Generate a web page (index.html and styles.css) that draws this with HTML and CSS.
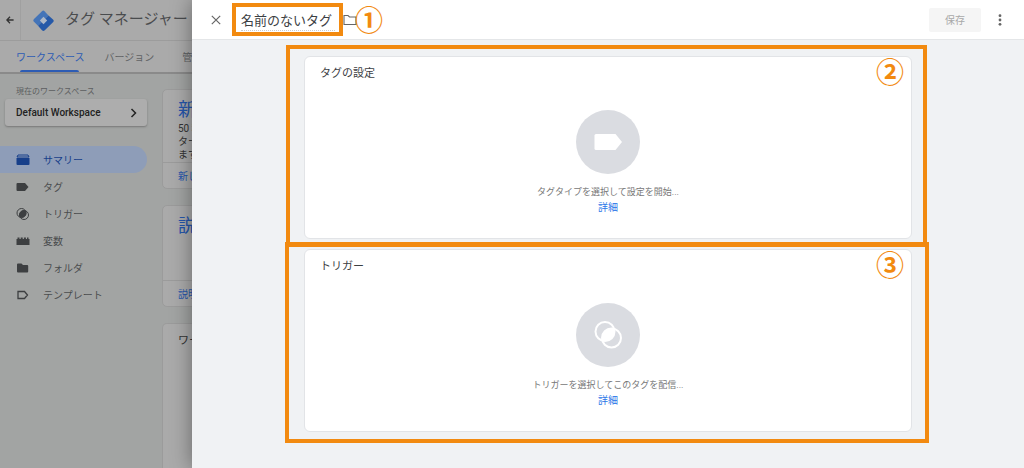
FILE: index.html
```html
<!DOCTYPE html>
<html lang="ja">
<head>
<meta charset="utf-8">
<title>タグ マネージャー</title>
<meta name="viewport" content="width=device-width, initial-scale=1">
<link rel="stylesheet" href="styles.css">
</head>
<body>
<div class="app">
  <header class="topbar">
    <button class="back" aria-label="戻る"><svg width="8" height="8" viewBox="0 0 8 8"><path d="M7.6 4H1M4 .8L.9 4 4 7.2" fill="none" stroke="#333" stroke-width="1.3"/></svg></button>
    <svg class="logo" width="21" height="21" viewBox="0 0 21 21"><path d="M9 1.2L1 9a2 2 0 0 0 0 2.800L5 15.800 15.500 5.500 11.500 1.200a1.800 1.800 0 0 0-2.500 0z" fill="#4474b8"/><path d="M15.500 5.500l4.500 4a1.800 1.800 0 0 1 0 2.700l-8.200 8a2 2 0 0 1-2.800 0L5 15.800z" fill="#2659a8"/><path d="M10.500 6.800l3.700 3.700-3.700 3.700-3.700-3.700z" fill="#aeb8c8"/></svg>
    <span class="product">タグ マネージャー</span>
  </header>
  <nav class="tabs">
    <a class="tab tab-active" href="#">ワークスペース</a>
    <a class="tab" href="#">バージョン</a>
    <a class="tab tab-last" href="#">管理</a>
  </nav>
  <div class="columns">
    <aside class="sidebar">
      <div class="ws-label">現在のワークスペース</div>
      <button class="ws-button">Default Workspace<svg width="7" height="10" viewBox="0 0 7 10"><path d="M1.500 1l4 4-4 4" fill="none" stroke="#222" stroke-width="1.500"/></svg></button>
      <nav class="menu">
        <a class="item item-active" href="#"><svg width="14" height="12" viewBox="0 0 14 12"><path d="M2 1h10l1 2H1z" fill="none" stroke="#173f8a"/><path d="M.5 4h13v6a1 1 0 0 1-1 1h-11a1 1 0 0 1-1-1z" fill="#173f8a"/></svg>サマリー</a>
        <a class="item" href="#"><svg width="14" height="12" viewBox="0 0 14 12"><path d="M1.500 2H9l3.500 4L9 10H1.500a1 1 0 0 1-1-1V3a1 1 0 0 1 1-1z" fill="#3d3f41"/></svg>タグ</a>
        <a class="item" href="#"><svg width="14" height="12" viewBox="0 0 14 12"><g fill="none" stroke="#3d3f41"><circle cx="5.500" cy="5" r="4.500"/><circle cx="8" cy="7" r="4.500"/></g><path d="M9.800 3A4.500 4.500 0 0 0 3.700 9.100 4.500 4.500 0 0 0 9.800 3z" fill="#3d3f41"/></svg>トリガー</a>
        <a class="item" href="#"><svg width="14" height="12" viewBox="0 0 14 12"><path d="M.5 10V4h1V2.500h2V4h1.200V2.500h2V4h1.200V2.500h2V4h1.100V2.500h1.500V4h1v6z" fill="#3d3f41"/></svg>変数</a>
        <a class="item" href="#"><svg width="14" height="12" viewBox="0 0 14 12"><path d="M2 1.500h3.500L7 3h4.200a1 1 0 0 1 1 1v5.500a1 1 0 0 1-1 1H2a1 1 0 0 1-1-1v-7a1 1 0 0 1 1-1z" fill="#3d3f41"/></svg>フォルダ</a>
        <a class="item" href="#"><svg width="14" height="12" viewBox="0 0 14 12"><path d="M2 2.500h6.500L11.500 6l-3 3.500H2z" fill="none" stroke="#3d3f41" stroke-width="1.300"/></svg>テンプレート</a>
      </nav>
    </aside>
    <main class="cards">
      <section class="tile">
        <div class="tile-body"><h2 class="tile-title">新しいタグ</h2><p class="tile-text">50 種類以上の<br>ターゲットを選び<br>ます。</p></div>
        <a class="tile-link" href="#">新しいタグを追加</a>
      </section>
      <section class="tile">
        <div class="tile-body tile-tall"><h2 class="tile-title">説明</h2></div>
        <a class="tile-link" href="#">説明を編集</a>
      </section>
      <section class="tile tile-last"><div class="tile-body"><h3 class="tile-sub">ワークスペースの変更</h3></div></section>
    </main>
  </div>
</div>

<div class="sheet" role="dialog" aria-label="名前のないタグ">
  <header class="sheet-head">
    <button class="close" aria-label="閉じる"><svg width="10" height="10" viewBox="0 0 10 10"><path d="M.8.8l8.400 8.400M9.200.8L.8 9.200" stroke="#666" stroke-width="1.200"/></svg></button>
    <label class="name"><input class="name-input" type="text" value="名前のないタグ" aria-label="タグ名"><span class="frame frame-name"></span></label>
    <svg class="folder" width="14" height="12" viewBox="0 0 14 12"><path d="M1 10.500V1.500h4l1.500 1.500H13v7.500z" fill="none" stroke="#666" stroke-width="1.100"/></svg>
    <span class="num">①</span>
    <button class="save" disabled>保存</button>
    <button class="more" aria-label="その他"><svg width="4" height="12" viewBox="0 0 4 12" fill="#666"><circle cx="2" cy="1.700" r="1.400"/><circle cx="2" cy="6" r="1.400"/><circle cx="2" cy="10.300" r="1.400"/></svg></button>
  </header>
  <div class="sheet-body">
    <section class="card">
      <h2 class="card-title">タグの設定</h2>
      <button class="disc" aria-label="タグタイプを選択"><svg width="64" height="64" viewBox="0 0 64 64"><path d="M20 24h19.500l6.500 8-6.500 8H20a1.500 1.500 0 0 1-1.500-1.500v-13A1.500 1.500 0 0 1 20 24z" fill="#fff"/></svg></button>
      <p class="hint">タグタイプを選択して設定を開始...</p>
      <a class="detail" href="#">詳細</a>
      <span class="frame frame-card"></span>
      <span class="num num-card">②</span>
    </section>
    <section class="card">
      <h2 class="card-title">トリガー</h2>
      <button class="disc" aria-label="トリガーを選択"><svg width="64" height="64" viewBox="0 0 64 64"><g fill="none" stroke="#fff" stroke-width="2"><circle cx="29" cy="28.500" r="9.500"/><circle cx="35.500" cy="35" r="9.500"/></g><path d="M38.100 25.900A9.500 9.500 0 0 0 26.400 37.600 9.500 9.500 0 0 0 38.100 25.900z" fill="#fff"/></svg></button>
      <p class="hint">トリガーを選択してこのタグを配信...</p>
      <a class="detail" href="#">詳細</a>
      <span class="frame frame-card frame-lower"></span>
      <span class="num num-card">③</span>
    </section>
  </div>
</div>
</body>
</html>
```
FILE: styles.css
```css
* { box-sizing: border-box; }
body {
  margin: 0;
  height: 100vh;
  overflow: hidden;
  position: relative;
  font-family: Roboto, "Noto Sans CJK JP", sans-serif;
  font-size: 10px;
  color: #4a4c4e;
  background: #a2a4a3;
}
button { border: 0; padding: 0; background: none; font: inherit; color: inherit; }
a { text-decoration: none; color: inherit; }
h2, h3, p { margin: 0; font-weight: 400; }
svg { display: block; flex: none; }

.app { height: 100%; display: flex; flex-direction: column; }
.topbar { display: flex; align-items: center; height: 41px; background: #aaa; border-bottom: 1px solid #9c9c9c; }
.back { align-self: stretch; width: 21px; display: flex; align-items: center; justify-content: center; border-right: 1px solid #a0a0a0; }
.logo { margin-left: 12px; }
.product { margin-left: 11px; font-size: 15px; line-height: 18px; padding-bottom: 2px; white-space: nowrap; }
.tabs { display: flex; height: 33px; padding-left: 16px; gap: 20px; background: #aaa; border-bottom: 2px solid #8a8a8a; white-space: nowrap; }
.tab { display: flex; align-items: center; position: relative; color: #606264; }
.tab-active { color: #2d5cb4; }
.tab-active::after { content: ""; position: absolute; left: 4px; right: 6px; bottom: 0; height: 2px; border-radius: 2px 2px 0 0; background: #2d5cb4; }
.tab-last { padding-left: 8px; }

.columns { display: flex; flex: 1; min-height: 0; }
.sidebar { width: 147px; flex: none; padding-top: 12px; }
.ws-label { padding-left: 16px; font-size: 8px; line-height: 12px; color: #5c5e60; }
.ws-button { display: flex; align-items: center; justify-content: space-between; width: 142px; height: 27px; margin: 1px 0 0 5px; padding: 0 10px 0 11px; border-radius: 3px; background: #adadad; box-shadow: 0 1px 2px #777; color: #222; font-weight: 500; }
.menu { margin-top: 20px; display: flex; flex-direction: column; }
.item { display: flex; align-items: center; gap: 13px; height: 27px; padding-left: 16px; border-radius: 0 14px 14px 0; }
.item-active { background: #8e9db8; color: #173f8a; }

.cards { flex: 1; padding: 15px 15px 0; display: flex; flex-direction: column; gap: 16px; }
.tile { border: 1px solid #9b9b9b; border-radius: 5px; background: #aaa; }
.tile-body { padding: 8px 15px 1px; }
.tile-tall { min-height: 74px; }
.tile-title { font-size: 18px; line-height: 24px; color: #2555aa; }
.tile-text { line-height: 13px; color: #333; }
.tile-link { display: flex; align-items: center; height: 26px; padding-left: 15px; border-top: 1px solid #9b9b9b; color: #2555aa; }
.tile-last { flex: 1; border-bottom: 0; border-radius: 5px 5px 0 0; }
.tile-sub { font-size: 11px; line-height: 18px; color: #333; }

.sheet { position: absolute; top: 0; right: 0; bottom: 0; left: 192px; display: flex; flex-direction: column; background: #f0f2f4; box-shadow: 0 0 20px rgba(0, 0, 0, .4); }
.sheet-head { display: flex; align-items: center; height: 40px; flex: none; padding: 0 22px 0 19px; background: #fff; border-bottom: 1px solid #e4e6e8; }
.name { position: relative; margin-left: 20px; }
.name-input { display: block; width: 94px; height: 23px; padding: 0; border: 0; border-bottom: 1px dotted #ccc; outline: 0; background: none; font: inherit; font-size: 13px; color: #3c4043; }
.folder { margin-left: 8px; }
.num { margin-left: -2px; padding-bottom: 2px; font-family: "Noto Sans CJK JP", sans-serif; font-weight: 700; font-size: 28px; line-height: 28px; color: #f28a10; }
.save { margin-left: auto; width: 52px; height: 24px; border-radius: 2px; background: #f5f5f5; color: #a8a8a8; }
.more { margin-left: 17px; }

.sheet-body { display: flex; flex-direction: column; gap: 10px; padding: 16px 112px 0; }
.card { position: relative; display: flex; flex-direction: column; align-items: center; padding: 8px 15px 22px; border: 1px solid #e2e4e7; border-radius: 6px; background: #fff; }
.card-title { align-self: stretch; font-size: 11px; line-height: 18px; color: #3c4043; }
.disc { margin-top: 27px; border-radius: 50%; background: #dadce1; }
.hint { margin-top: 10px; font-size: 9px; line-height: 16px; color: #777; }
.detail { line-height: 16px; color: #2a75e8; }

.frame { position: absolute; border: 4px solid #f28a10; pointer-events: none; }
.frame-name { inset: -5px -8px -5px -9px; }
.frame-card { inset: -12px -16px -9px -19px; }
.frame-lower { inset: -8px -18px -12px -20px; }
.num-card { position: absolute; top: 0; right: 7px; }
```
